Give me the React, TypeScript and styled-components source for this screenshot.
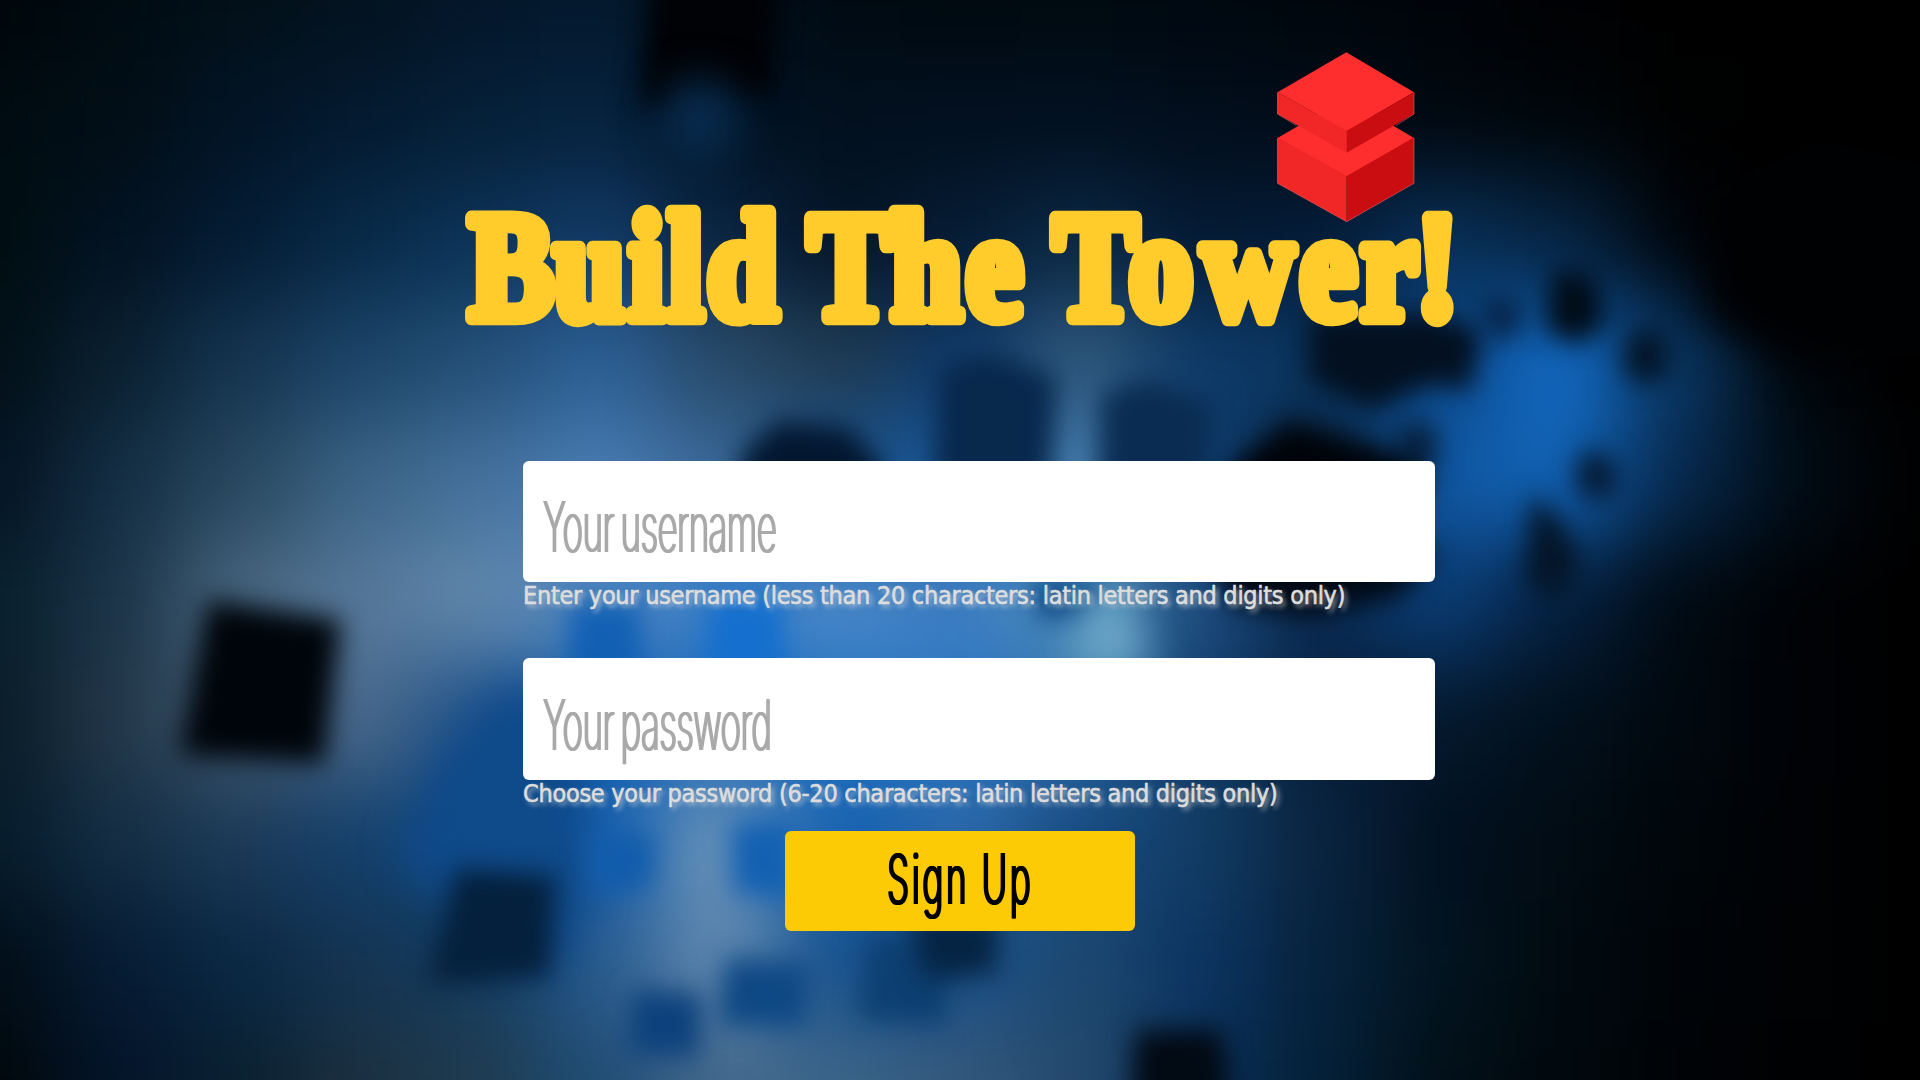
import React from 'react';
import styled, { createGlobalStyle } from 'styled-components';

const GlobalStyle = createGlobalStyle`
  * { box-sizing: border-box; }
  body { margin: 0; background: #000; overflow: hidden; }
`;

const Page = styled.main`
  position: relative;
  width: 100%;
  height: 1080px;
  overflow: hidden;
  display: flex;
  flex-direction: column;
  align-items: center;
`;

const Backdrop = styled.svg`
  position: absolute;
  inset: 0;
  width: 1920px;
  height: 1080px;
  z-index: -1;
`;

const Logo = styled.svg`
  display: block;
  flex: none;
  width: 1040px;
  height: 320px;
  margin-top: 30px;
  overflow: visible;
`;

const TitleText = styled.text`
  font-family: 'Liberation Serif', serif;
  font-weight: 700;
  font-size: 152px;
  fill: #ffcc2c;
  stroke: #ffcc2c;
  stroke-width: 14.5px;
  stroke-linejoin: round;
`;

const Form = styled.form`
  display: flex;
  flex-direction: column;
  align-items: center;
  width: 874px;
  margin-top: 111px;
`;

const Field = styled.label<{ $gap: number }>`
  display: flex;
  flex-direction: column;
  width: 912px;
  margin-left: 38px;
  margin-bottom: ${(p) => p.$gap}px;
`;

const InputBox = styled.span<{ $height: number }>`
  display: block;
  height: ${(p) => p.$height}px;
  padding: 0 20px;
  overflow: hidden;
  background: #fff;
  border-radius: 6px;
`;

const Input = styled.input`
  display: block;
  width: 1700px;
  height: 100%;
  padding: 10px 0 0;
  border: 0;
  outline: 0;
  background: transparent;
  font-family: Inter, sans-serif;
  font-weight: 200;
  font-size: 70px;
  letter-spacing: -1.2px;
  word-spacing: -5px;
  transform: scaleX(0.5);
  transform-origin: left;
  &::placeholder {
    color: #a9a9a9;
    opacity: 1;
    text-shadow: 2px 0 #a9a9a9, -2px 0 #a9a9a9;
  }
`;

const Hint = styled.span`
  height: 30px;
  font-family: 'DejaVu Sans Condensed', 'DejaVu Sans', sans-serif;
  font-stretch: condensed;
  font-size: 25px;
  line-height: 28px;
  letter-spacing: -0.275px;
  white-space: nowrap;
  color: #ddd;
  -webkit-text-stroke: 0.6px #ddd;
  text-shadow: 3px 3px 5px rgba(221, 221, 221, 0.75);
`;

const SubmitButton = styled.button`
  display: flex;
  align-items: center;
  justify-content: center;
  width: 350px;
  height: 100px;
  padding: 0 0 5px;
  border: 0;
  border-radius: 6px;
  background: #fccb06;
  color: #000;
`;

const SubmitLabel = styled.span`
  flex: none;
  font-family: Inter, sans-serif;
  font-size: 70px;
  font-weight: 300;
  letter-spacing: 5px;
  white-space: nowrap;
  text-shadow: 2px 0 #000, -2px 0 #000;
  transform: scaleX(0.5);
`;

/* Light samples of the backdrop, one per 120px step. */
const GLOW = [
  '00060a 000b12 021018 03121f 04162a 04192e 020f1c 000a12 00090f 000a10 000810 00060c 000409 000103 000000 000000 000000',
  '000c12 020e16 021426 041a30 052038 06233f 021324 02101e 021020 021020 020e1c 020c18 010810 00060a 000101 000000 000000',
  '000e12 021222 041c34 072a48 0c3358 123a66 0a2542 041528 061c34 0a2844 041a34 041c38 083058 062442 01060c 000000 000000',
  '021018 0a2030 143450 1c4468 245078 2c5f96 284a68 1f3b52 0f3a6c 30587c 0e3a68 0a3560 0c4888 126ac4 0a3662 01060a 000000',
  '041424 142e44 28485f 3c6486 44719c 4a7db4 3a6898 1c5590 1a5a9c 4c84b4 0f4278 0a2038 1058a4 1262b4 06284c 010c16 000000',
  '08202e 1c3448 48667f 56789a 6288ac 4f86c0 3c80c8 4a88c8 3c7cc0 5090bc 1e4c80 0a2c54 0a3c74 052040 010a12 000205 000000',
  '0a1c28 24384a 40596f 48688a 1e5088 1460b0 1c68b8 2070c0 2a78c4 2c68a4 0f3c68 061c38 04182c 02101c 01080f 000206 000000',
  '061c2c 142e44 1c3a58 14406c 104880 1460b0 6c94b8 1460b0 2c68a8 164a80 123c64 0a2440 021020 020c14 00060a 000205 000000',
  '020e18 061c34 0a2844 143452 143c60 2a5c90 5f88b0 14508c 1a5088 1c4870 0c3462 06223c 021420 010a10 000408 000204 000000',
  '01080c 04142a 0a2030 1c3040 1f3c50 1f4c74 44688c 3c6488 34587c 24486c 0a3058 042038 021018 01080e 000306 000103 000000',
].map((row) => row.split(' '));

type Softness = 'near' | 'mid' | 'far';
type Shape = { points: string; color: string; blur?: Softness };

const BLUR: Record<Softness, number> = { near: 10, mid: 13, far: 20 };

const CUBES: Shape[] = [
  { points: '208,600 341,620 324,764 180,755', color: '#00050b' },
  { points: '652,-30 778,-30 772,95 640,108', color: '#000205' },
  { points: '670,80 730,82 738,140 700,165 665,140', color: '#082b4e', blur: 'far' },
  { points: '1700,195 1820,140 1990,180 1990,350 1795,362 1706,320', color: '#000103', blur: 'far' },
  { points: '1308,315 1430,312 1482,330 1470,390 1430,384 1370,410 1308,380', color: '#031020' },
  { points: '1480,300 1515,295 1522,330 1490,340', color: '#062244' },
  { points: '1552,268 1594,272 1606,324 1575,344 1545,328', color: '#010c18' },
  { points: '1630,330 1664,328 1670,374 1645,386 1622,370', color: '#031426' },
  { points: '1582,450 1612,456 1620,490 1592,504 1574,482', color: '#051a34' },
  { points: '1532,494 1560,520 1582,560 1562,604 1524,584', color: '#041528' },
  { points: '1400,420 1434,425 1438,462 1398,466', color: '#07203c' },
  { points: '1290,420 1425,462 1425,495 1220,495 1235,462', color: '#00040a' },
  { points: '940,366 990,352 1056,376 1050,490 932,490', color: '#08284c' },
  { points: '1102,392 1150,378 1214,402 1210,490 1098,490', color: '#0a2c52' },
  { points: '780,420 850,428 886,470 886,495 732,495 746,448', color: '#031730' },
  { points: '1030,580 1110,578 1090,618 1040,622', color: '#104a88' },
  { points: '1210,550 1440,550 1400,596 1310,618 1230,604', color: '#010a16' },
  { points: '1096,590 1125,590 1152,670 1064,670', color: '#6ca8c8', blur: 'far' },
  { points: '570,605 638,602 646,690 568,690', color: '#1260b4' },
  { points: '710,600 780,596 788,690 704,690', color: '#146fce' },
  { points: '498,690 570,690 590,880 560,980 450,900 400,860 440,760', color: '#0f4a8a', blur: 'far' },
  { points: '456,868 556,876 550,978 428,984', color: '#04203c' },
  { points: '588,832 654,834 650,888 592,894', color: '#125cac' },
  { points: '732,822 796,822 796,900 734,894', color: '#1360b2' },
  { points: '632,990 702,994 698,1058 628,1054', color: '#0d417c' },
  { points: '726,958 812,964 806,1028 718,1026', color: '#0e4884' },
  { points: '870,935 948,938 946,1026 858,1018', color: '#0d3f72' },
  { points: '906,915 1001,915 996,974 926,980', color: '#052443' },
  { points: '1136,1030 1222,1030 1232,1120 1130,1120', color: '#020a14' },
];

const Background = () => (
  <Backdrop viewBox="0 0 1920 1080" aria-hidden="true">
    <defs>
      <filter id="haze" filterUnits="userSpaceOnUse" x="-300" y="-300" width="2520" height="1680" colorInterpolationFilters="sRGB">
        <feGaussianBlur stdDeviation="42" />
      </filter>
      {(Object.keys(BLUR) as Softness[]).map((name) => (
        <filter key={name} id={name} filterUnits="userSpaceOnUse" x="-100" y="-100" width="2180" height="1320" colorInterpolationFilters="sRGB">
          <feGaussianBlur stdDeviation={BLUR[name]} />
        </filter>
      ))}
    </defs>
    <g filter="url(#haze)" shapeRendering="crispEdges">
      {GLOW.map((row, r) =>
        row.map((color, c) => {
          const left = c === 0 ? -260 : c * 120 - 60;
          const top = r === 0 ? -260 : r * 120 - 60;
          return (
            <rect
              key={`${r}-${c}`}
              x={left}
              y={top}
              width={(c === 16 ? 2180 : c * 120 + 60) - left}
              height={(r === 9 ? 1340 : r * 120 + 60) - top}
              fill={`#${color}`}
            />
          );
        }),
      )}
    </g>
    {CUBES.map((cube) => (
      <polygon key={cube.points} points={cube.points} fill={cube.color} filter={`url(#${cube.blur ?? 'mid'})`} />
    ))}
  </Backdrop>
);

const SQUEEZE = 0.84;

/* A condensed word; `stops` holds the left origin of each letter. */
const TitleWord = ({ stops, children }: { stops: number[]; children: string }) => (
  <TitleText x={stops.map((s) => (s / SQUEEZE).toFixed(1)).join(' ')} y="318" transform={`scale(${SQUEEZE} 1)`}>
    {children}
  </TitleText>
);

const Title = () => (
  <Logo viewBox="440 30 1040 320" role="img" aria-label="Build The Tower!">
    <polygon points="1277.5,138 1346.5,98 1414,138 1346.7,177" fill="#ff2e2e" />
    <polygon points="1277.5,137.5 1346.7,176 1346.7,221.7 1277.5,183.3" fill="#f12626" />
    <polygon points="1414,137.5 1346.7,176 1346.7,221.7 1414,183.3" fill="#c90d10" />
    <polygon points="1346.3,52.3 1414,92.3 1346.7,131 1277.5,92.3" fill="#ff2e2e" />
    <polygon points="1277.5,92.3 1346.7,130.7 1346.7,152.7 1277.5,114" fill="#f12626" />
    <polygon points="1414,92.3 1346.7,130.7 1346.7,152.7 1414,114" fill="#c90d10" />
    <path d="M1277.5 92.3V114L1296.5 125.5M1414 92.3V114L1396 125.5M1277.5 138V183.3L1346.7 221.7L1414 183.3V138" fill="none" stroke="#e86a70" strokeWidth="0.8" opacity="0.7" />
    <TitleWord stops={[469, 554, 629, 668, 707]}>Build</TitleWord>
    <TitleWord stops={[808, 891, 966]}>The</TitleWord>
    <TitleWord stops={[1053, 1129, 1202, 1300, 1361, 1416]}>Tower!</TitleWord>
  </Logo>
);

export default function App() {
  return (
    <Page>
      <GlobalStyle />
      <Background />
      <Title />
      <Form onSubmit={(e: React.FormEvent) => e.preventDefault()}>
        <Field $gap={46}>
          <InputBox $height={121}>
            <Input type="text" placeholder="Your username" />
          </InputBox>
          <Hint>Enter your username (less than 20 characters: latin letters and digits only)</Hint>
        </Field>
        <Field $gap={21}>
          <InputBox $height={122}>
            <Input type="text" placeholder="Your password" />
          </InputBox>
          <Hint>Choose your password (6-20 characters: latin letters and digits only)</Hint>
        </Field>
        <SubmitButton type="submit">
          <SubmitLabel>Sign Up</SubmitLabel>
        </SubmitButton>
      </Form>
    </Page>
  );
}
